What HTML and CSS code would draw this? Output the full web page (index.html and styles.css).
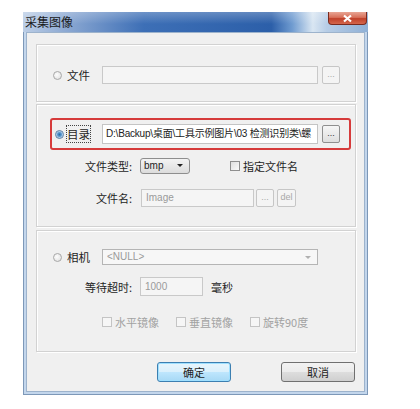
FILE: index.html
```html
<!DOCTYPE html>
<html lang="zh-CN">
  <head>
    <meta charset="UTF-8" />
    <title>采集图像</title>
    <link rel="stylesheet" href="styles.css">
  </head>
  <body>
    <div class="window">
      <div class="titlebar">
        <span class="title">采集图像</span>
        <div class="close">
          <svg width="11" height="9" viewBox="0 0 11 9"><path d="M2 1.5 L9 7.5 M9 1.5 L2 7.5" stroke="#fff" stroke-width="2.2"/></svg>
        </div>
      </div>
      <div class="content">
        <div class="group group-file">
          <div class="opt">
            <span class="radio"></span>
            <span class="opt-label">文件</span>
            <div class="input wide disabled"></div>
            <div class="btn-small disabled">...</div>
          </div>
        </div>

        <div class="group group-dir">
          <div class="opt highlight">
            <span class="radio checked"></span>
            <span class="opt-label focus">目录</span>
            <div class="input wide path">D:\Backup\桌面\工具示例图片\03 检测识别类\螺</div>
            <div class="btn-small">...</div>
          </div>
          <div class="row row-type">
            <span class="label">文件类型:</span>
            <div class="combo">bmp<span class="arrow"></span></div>
            <span class="check"></span>
            <span class="check-text">指定文件名</span>
          </div>
          <div class="row row-name">
            <span class="label">文件名:</span>
            <div class="input name disabled">Image</div>
            <div class="btn-small disabled">...</div>
            <div class="btn-small del disabled">del</div>
          </div>
        </div>

        <div class="group group-cam">
          <div class="opt cam">
            <span class="radio"></span>
            <span class="opt-label">相机</span>
            <div class="input wide combo-off">&lt;NULL&gt;<span class="arrow light"></span></div>
          </div>
          <div class="row row-wait">
            <span class="label">等待超时:</span>
            <div class="input wait disabled">1000</div>
            <span class="unit">毫秒</span>
          </div>
          <div class="row row-mirror">
            <div class="mirror"><span class="check off"></span>水平镜像</div>
            <div class="mirror"><span class="check off"></span>垂直镜像</div>
            <div class="mirror"><span class="check off"></span>旋转90度</div>
          </div>
        </div>

        <div class="actions">
          <div class="button default">确定</div>
          <div class="button">取消</div>
        </div>
      </div>
    </div>
  </body>
</html>
```

FILE: styles.css
```css
* {
  margin: 0;
  padding: 0;
  box-sizing: border-box;
}

body {
  background: #fff;
  font-family: "Noto Sans CJK SC", "Liberation Sans", sans-serif;
  font-size: 11px;
  color: #1e1e1e;
}

.window {
  margin: 12px 0 0 23px;
  width: 345px;
  height: 383px;
  border: 1px solid #7d98b8;
  border-top: none;
  background: #c3d6ec;
  display: flex;
  flex-direction: column;
}

.titlebar {
  height: 20px;
  margin: 0 -1px;
  display: flex;
  justify-content: space-between;
  align-items: flex-start;
  background:
    linear-gradient(to bottom, rgba(255,255,255,0.25), rgba(255,255,255,0) 60%),
    linear-gradient(to right, #bccee6 0%, #8eaad3 12%, #3d6fb6 35%, #2c5fa9 72%, #6f9bd0 78%, #d9e6f2 84%, #b7cde6 88%, #8fb0d6 100%);
}

.title {
  font-size: 12px;
  line-height: 20px;
  padding-left: 2px;
  color: #1a1a1a;
}

.close {
  width: 39px;
  height: 13px;
  margin-right: 1px;
  border: 1px solid #7a2a1e;
  border-top: none;
  border-radius: 0 0 4px 4px;
  background: linear-gradient(to bottom, #e8a594 0%, #d8705a 45%, #c0412a 55%, #d4664c 100%);
  display: flex;
  justify-content: center;
  align-items: center;
}

.content {
  flex: 1;
  margin: 0 2px 2px 2px;
  background: #f0f0f0;
  border: 1px solid #9db3cc;
  padding: 11px 8px 0 9px;
}

.group {
  border: 1px solid #d2d2d2;
  box-shadow: inset 1px 1px 0 #fff, 1px 1px 0 #fff;
}

.group-file {
  height: 58px;
  padding: 21px 0 0 16px;
}

.group-dir {
  height: 123px;
  margin-top: 2px;
  padding: 13px 0 0 0;
}

.group-cam {
  height: 122px;
  margin-top: 3px;
  padding: 18px 0 0 0;
}

.opt {
  display: flex;
  align-items: center;
}

.opt .radio {
  margin-right: 5px;
}

.opt-label {
  width: 35px;
  font-size: 11.5px;
}

.opt-label.focus {
  outline: 1px dotted #444;
  outline-offset: 0;
  width: 23px;
  margin-right: 12px;
}

.highlight {
  margin-left: 13px;
  width: 301px;
  height: 32px;
  border: 2px solid #d63b3b;
  border-radius: 3px;
  padding-left: 3px;
}

.highlight .radio {
  margin-right: 3px;
}

.cam {
  padding-left: 16px;
}

.radio {
  width: 9px;
  height: 9px;
  border-radius: 50%;
  border: 1px solid #a8a8a8;
  background: radial-gradient(circle at 40% 40%, #fdfdfd, #dcdcdc);
  display: inline-block;
  flex: none;
}

.radio.checked {
  border-color: #5a7fa5;
  background: radial-gradient(circle, #2b6aa3 0, #5e9bd0 2px, #a7c8e6 3px, #e6eef6 4px);
}

.input {
  height: 18px;
  border: 1px solid #abadb3;
  background: #fff;
  font-family: "Liberation Sans", "Noto Sans CJK SC", sans-serif;
  font-size: 10px;
  line-height: 16px;
  padding-left: 4px;
  white-space: nowrap;
  overflow: hidden;
  position: relative;
  flex: none;
}

.input.disabled {
  background: #f5f5f5;
  border-color: #c9c9c9;
  color: #9a9a9a;
}

.input.wide {
  width: 216px;
}

.path {
  height: 20px;
  line-height: 18px;
  font-size: 10px;
  letter-spacing: -0.2px;
  padding-left: 3px;
  color: #222;
  border-color: #c4c4c4;
}

.btn-small {
  width: 18px;
  height: 18px;
  margin-left: 4px;
  border: 1px solid #8f8f8f;
  border-radius: 2px;
  background: linear-gradient(to bottom, #f6f6f6, #dedede);
  font-family: "Liberation Sans", sans-serif;
  font-size: 9px;
  line-height: 14px;
  text-align: center;
  color: #333;
  flex: none;
}

.btn-small.disabled {
  border-color: #c6c6c6;
  background: #f4f4f4;
  color: #a8a8a8;
}

.row {
  display: flex;
  align-items: center;
}

.label {
  width: 95px;
  text-align: right;
  margin-right: 8px;
}

.row-type {
  margin-top: 8px;
  height: 16px;
}

.combo {
  width: 50px;
  height: 16px;
  border: 1px solid #8e8e8e;
  border-radius: 3px;
  background: linear-gradient(to bottom, #f3f3f3, #dcdcdc);
  font-family: "Liberation Sans", sans-serif;
  font-size: 10px;
  line-height: 14px;
  padding-left: 3px;
  position: relative;
}

.arrow {
  position: absolute;
  right: 6px;
  top: 5px;
  border-left: 3px solid transparent;
  border-right: 3px solid transparent;
  border-top: 3px solid #222;
}

.arrow.light {
  border-top-color: #b0b0b0;
}

.check {
  width: 10px;
  height: 10px;
  border: 1px solid #8f8f8f;
  background: linear-gradient(135deg, #e0e0e0, #fbfbfb);
  display: inline-block;
}

.row-type .check {
  margin-left: 40px;
  margin-right: 3px;
}

.check-text {
  font-size: 11px;
}

.row-name {
  margin-top: 15px;
}

.row-name .label {
  margin-right: 9px;
}

.input.name {
  width: 113px;
}

.row-name .btn-small {
  margin-left: 2px;
}

.row-name .del {
  width: 19px;
  margin-left: 3px;
}

.combo-off {
  height: 16px;
  line-height: 14px;
  background: #f7f7f7;
  border-color: #b5b5b5;
  color: #9a9a9a;
}

.combo-off .arrow {
  top: 6px;
}

.row-wait {
  margin-top: 12px;
}

.input.wait {
  width: 63px;
  height: 19px;
  line-height: 17px;
}

.unit {
  margin-left: 8px;
}

.row-mirror {
  margin-top: 18px;
  padding-left: 65px;
}

.mirror {
  width: 74px;
  display: flex;
  align-items: center;
  color: #a2a2a2;
}

.mirror .check {
  margin-right: 3px;
}

.check.off {
  border-color: #c4c4c4;
  background: #f6f6f6;
}

.actions {
  display: flex;
  justify-content: flex-end;
  gap: 50px;
  margin-top: 10px;
  padding-right: 1px;
}

.button {
  width: 74px;
  height: 20px;
  border: 1px solid #707070;
  border-radius: 3px;
  background: linear-gradient(to bottom, #f2f2f2 0%, #ebebeb 50%, #dddddd 51%, #cfcfcf 100%);
  text-align: center;
  line-height: 18px;
  font-size: 11px;
}

.button.default {
  border-color: #3c7fb1;
  background: linear-gradient(to bottom, #e8f5fc 0%, #d9f0fc 50%, #bee6fd 51%, #a7d9f5 100%);
  box-shadow: inset 0 0 0 1px #9fe0ff;
}
```
